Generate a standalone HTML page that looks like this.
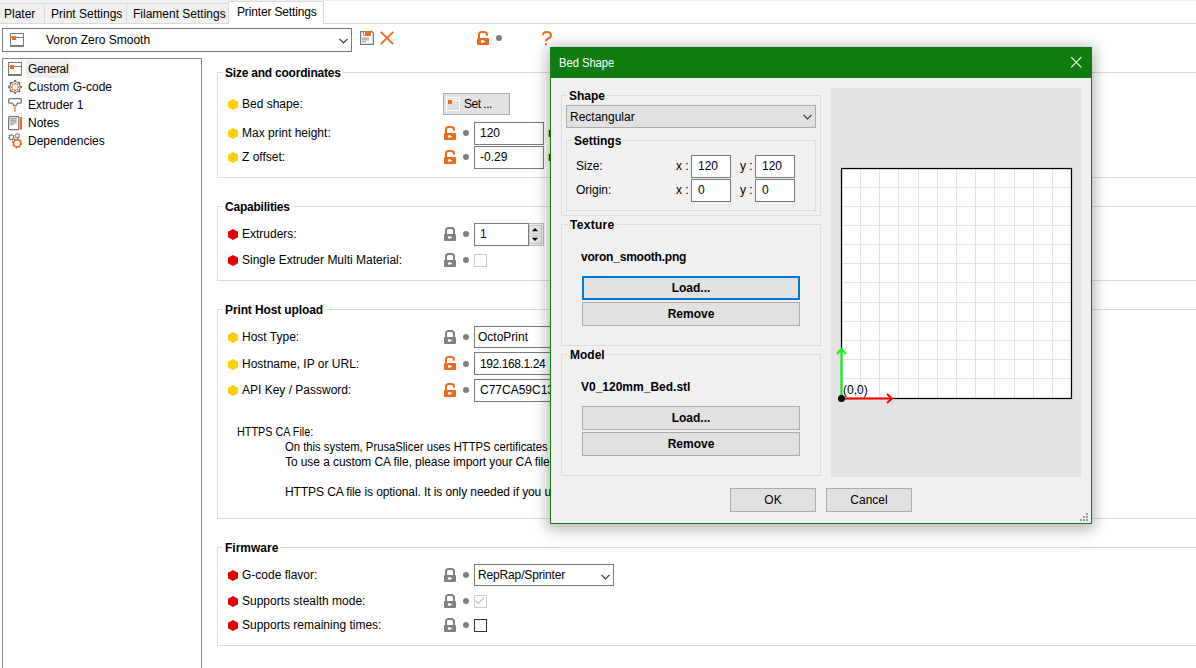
<!DOCTYPE html>
<html><head><meta charset="utf-8">
<style>
*{margin:0;padding:0;box-sizing:border-box}
html,body{width:1196px;height:668px;overflow:hidden;background:#fff;font-family:"Liberation Sans",sans-serif;font-size:12px;color:#000}
.a{position:absolute}
.t{position:absolute;white-space:nowrap;line-height:14px;height:14px}
.b{font-weight:bold}
.gb{position:absolute;border:1px solid #dcdcdc}
.gt{position:absolute;white-space:nowrap;font-weight:bold;line-height:14px;padding:0 2px}
.inp{position:absolute;background:#fff;border:1px solid #7a7a7a}
.btn{position:absolute;background:#e1e1e1;border:1px solid #adadad;text-align:center}
.hexy{position:absolute;width:10px;height:11px;background:#ffd000;clip-path:polygon(50% 0,100% 25%,100% 75%,50% 100%,0 75%,0 25%)}
.hexr{position:absolute;width:10px;height:11px;background:#e20000;clip-path:polygon(50% 0,100% 25%,100% 75%,50% 100%,0 75%,0 25%)}
.dot{position:absolute;width:6px;height:6px;border-radius:3px;background:#808080}
</style></head><body>

<!-- tab header -->
<div class="a" style="left:0;top:0;width:1196px;height:1px;background:#f0f0f0"></div>
<div class="a" style="left:0;top:1px;width:228px;height:3px;background:#f0f0f0"></div>
<div class="a" style="left:0;top:3px;width:228px;height:21px;background:#f0f0f0;border-top:1px solid #dadada;border-bottom:1px solid #dadada"></div>
<div class="a" style="left:44px;top:3px;width:1px;height:21px;background:#dadada"></div>
<div class="a" style="left:126px;top:3px;width:1px;height:21px;background:#dadada"></div>
<div class="a" style="left:323px;top:23px;width:873px;height:1px;background:#dadada"></div>
<div class="a" style="left:228px;top:1px;width:96px;height:23px;background:#fff;border:1px solid #dadada;border-bottom:none"></div>
<div class="t" style="left:4px;top:7px">Plater</div>
<div class="t" style="left:51px;top:7px">Print Settings</div>
<div class="t" style="left:133px;top:7px">Filament Settings</div>
<div class="t" style="left:237px;top:5px;letter-spacing:-0.15px">Printer Settings</div>

<!-- preset combo -->
<div class="a" style="left:2px;top:28px;width:350px;height:24px;border:1px solid #7a7a7a;background:#fff"></div>
<svg class="a" style="left:10px;top:33px" width="14" height="14" viewBox="0 0 14 14"><rect x="0.5" y="0.5" width="13" height="12" fill="#fff" stroke="#7a7a7a"/><rect x="0" y="12" width="14" height="2" fill="#7a7a7a"/><line x1="0" y1="4.5" x2="14" y2="4.5" stroke="#7a7a7a"/><rect x="2" y="3" width="4" height="4" fill="#ed6b21"/></svg>
<div class="t" style="left:46px;top:33px">Voron Zero Smooth</div>
<svg class="a" style="left:339px;top:38px" width="9" height="6" viewBox="0 0 9 6"><polyline points="0.5,0.8 4.5,4.8 8.5,0.8" fill="none" stroke="#333" stroke-width="1.2"/></svg>
<!-- save icon -->
<svg class="a" style="left:360px;top:31px" width="14" height="14" viewBox="0 0 14 14"><path d="M0.6 0.6 H12 L13.4 2 V13.4 H0.6 Z" fill="#fff" stroke="#777" stroke-width="1.2"/><rect x="3" y="0" width="8" height="5" rx="1" fill="#ed6b21"/><rect x="4" y="1" width="1" height="3" fill="#fff"/><rect x="2" y="6.5" width="7" height="1.3" fill="#aaa"/><rect x="2" y="8.2" width="7" height="1.3" fill="#aaa"/><rect x="2" y="10" width="4" height="1.3" fill="#aaa"/></svg>
<svg class="a" style="left:380px;top:31px" width="14" height="14" viewBox="0 0 14 14"><path d="M0.8 0.8 L13.2 13.2 M13.2 0.8 L0.8 13.2" stroke="#ed6b21" stroke-width="1.9"/></svg>
<!-- top lock and ? -->
<svg class="a" style="left:477px;top:31px" width="13" height="14"><use href="#locko"/></svg>
<div class="dot" style="left:496px;top:35px"></div>
<svg class="a" style="left:542px;top:31px" width="11" height="15" viewBox="0 0 11 15"><path d="M1 4.3 Q1 1 5 1 Q9 1 9 4.3 Q9 6.6 6.2 7.5 Q4 8.3 4 10.6" fill="none" stroke="#ed6b21" stroke-width="1.9"/><rect x="3" y="12.3" width="2" height="1.8" fill="#ed6b21"/></svg>

<!-- tree -->
<div class="a" style="left:2px;top:58px;width:200px;height:620px;border:1px solid #828790;background:#fff"></div>
<div class="a" style="left:26px;top:60px;width:44px;height:18px;background:#efefef"></div>
<svg class="a" style="left:8px;top:62px" width="14" height="14" viewBox="0 0 14 14"><rect x="0.5" y="0.5" width="13" height="12" fill="#fff" stroke="#7a7a7a"/><rect x="0" y="12" width="14" height="2" fill="#7a7a7a"/><line x1="0" y1="4.5" x2="14" y2="4.5" stroke="#7a7a7a"/><rect x="2" y="3" width="4" height="4" fill="#ed6b21"/></svg>
<svg class="a" style="left:8px;top:80px" width="14" height="14" viewBox="0 0 14 14"><path d="M5.61 1.58 L6.12 0.06 L7.88 0.06 L8.39 1.58 L9.85 2.18 L11.29 1.47 L12.53 2.71 L11.82 4.15 L12.42 5.61 L13.94 6.12 L13.94 7.88 L12.42 8.39 L11.82 9.85 L12.53 11.29 L11.29 12.53 L9.85 11.82 L8.39 12.42 L7.88 13.94 L6.12 13.94 L5.61 12.42 L4.15 11.82 L2.71 12.53 L1.47 11.29 L2.18 9.85 L1.58 8.39 L0.06 7.88 L0.06 6.12 L1.58 5.61 L2.18 4.15 L1.47 2.71 L2.71 1.47 L4.15 2.18 Z M2.30 7.00 a4.70 4.70 0 1 0 9.40 0 a4.70 4.70 0 1 0 -9.40 0 Z" fill="#787878" fill-rule="evenodd"/><rect x="6.15" y="3" width="1.7" height="1.5" fill="#ed6b21" transform="rotate(0 7 7)"/><rect x="6.15" y="3" width="1.7" height="1.5" fill="#ed6b21" transform="rotate(45 7 7)"/><rect x="6.15" y="3" width="1.7" height="1.5" fill="#ed6b21" transform="rotate(90 7 7)"/><rect x="6.15" y="3" width="1.7" height="1.5" fill="#ed6b21" transform="rotate(135 7 7)"/><rect x="6.15" y="3" width="1.7" height="1.5" fill="#ed6b21" transform="rotate(180 7 7)"/><rect x="6.15" y="3" width="1.7" height="1.5" fill="#ed6b21" transform="rotate(225 7 7)"/><rect x="6.15" y="3" width="1.7" height="1.5" fill="#ed6b21" transform="rotate(270 7 7)"/><rect x="6.15" y="3" width="1.7" height="1.5" fill="#ed6b21" transform="rotate(315 7 7)"/></svg>
<svg class="a" style="left:8px;top:98px" width="15" height="15" viewBox="0 0 15 15"><path d="M1.6 0.7 H12.4 Q13.3 0.7 13.3 1.6 V4.3 Q13.3 5.2 12.4 5.2 H10 Q9.4 5.2 9 6 Q8.3 7.8 7 7.8 Q5.7 7.8 5 6 Q4.6 5.2 4 5.2 H1.6 Q0.7 5.2 0.7 4.3 V1.6 Q0.7 0.7 1.6 0.7 Z" fill="#fff" stroke="#777" stroke-width="1.3"/><rect x="6" y="8.4" width="2" height="5.4" fill="#f4a271"/></svg>
<svg class="a" style="left:8px;top:116px" width="15" height="15" viewBox="0 0 15 15"><rect x="0.65" y="0.65" width="10.2" height="13" rx="0.8" fill="#fff" stroke="#777" stroke-width="1.3"/><rect x="2.2" y="2" width="6.5" height="6.2" fill="#d4d4d4"/><rect x="2.2" y="2" width="6.5" height="1.1" fill="#a6a6a6"/><rect x="2.2" y="3.8" width="6.5" height="1.1" fill="#a6a6a6"/><rect x="2.2" y="5.6" width="6.5" height="1.1" fill="#a6a6a6"/><rect x="2.2" y="7.4" width="3.8" height="1.8" fill="#b0b0b0"/><rect x="12" y="1" width="2" height="12.7" fill="#ed6b21"/></svg>
<svg class="a" style="left:5px;top:130px" width="20" height="20" viewBox="0 0 20 20"><path d="M5.64 4.92 L5.72 3.97 L7.08 3.97 L7.16 4.92 L7.79 5.22 L8.58 4.69 L9.43 5.76 L8.74 6.41 L8.89 7.09 L9.80 7.38 L9.50 8.71 L8.55 8.57 L8.12 9.11 L8.46 10.01 L7.23 10.60 L6.75 9.78 L6.05 9.78 L5.57 10.60 L4.34 10.01 L4.68 9.11 L4.25 8.57 L3.30 8.71 L3.00 7.38 L3.91 7.09 L4.06 6.41 L3.37 5.76 L4.22 4.69 L5.01 5.22 Z M4.70 7.30 a1.70 1.70 0 1 0 3.40 0 a1.70 1.70 0 1 0 -3.40 0 Z" fill="#727272" fill-rule="evenodd"/><path d="M11.66 3.84 L11.75 3.08 L13.05 3.08 L13.14 3.84 L13.73 4.17 L14.43 3.87 L15.08 5.00 L14.47 5.46 L14.47 6.14 L15.08 6.60 L14.43 7.73 L13.73 7.43 L13.14 7.76 L13.05 8.52 L11.75 8.52 L11.66 7.76 L11.07 7.43 L10.37 7.73 L9.72 6.60 L10.33 6.14 L10.33 5.46 L9.72 5.00 L10.37 3.87 L11.07 4.17 Z M11.20 5.80 a1.20 1.20 0 1 0 2.40 0 a1.20 1.20 0 1 0 -2.40 0 Z" fill="#858585" fill-rule="evenodd"/><path d="M11.80 9.01 L12.22 8.00 L14.01 8.36 L14.01 9.46 L14.85 10.03 L15.86 9.61 L16.87 11.13 L16.09 11.90 L16.29 12.90 L17.30 13.32 L16.94 15.11 L15.84 15.11 L15.27 15.95 L15.69 16.96 L14.17 17.97 L13.40 17.19 L12.40 17.39 L11.98 18.40 L10.19 18.04 L10.19 16.94 L9.35 16.37 L8.34 16.79 L7.33 15.27 L8.11 14.50 L7.91 13.50 L6.90 13.08 L7.26 11.29 L8.36 11.29 L8.93 10.45 L8.51 9.44 L10.03 8.43 L10.80 9.21 Z M9.30 13.20 a2.80 2.80 0 1 0 5.60 0 a2.80 2.80 0 1 0 -5.60 0 Z" fill="#ed6b21" fill-rule="evenodd"/></svg>
<div class="t" style="left:28px;top:62px;letter-spacing:-0.35px">General</div>
<div class="t" style="left:28px;top:80px">Custom G-code</div>
<div class="t" style="left:28px;top:98px">Extruder 1</div>
<div class="t" style="left:28px;top:116px">Notes</div>
<div class="t" style="left:28px;top:134px">Dependencies</div>

<!-- group boxes main -->
<div class="gb" style="left:217px;top:72px;width:1000px;height:106px"></div>
<div class="gt" style="left:223px;top:66px;background:#fff;letter-spacing:-0.22px">Size and coordinates</div>
<div class="gb" style="left:217px;top:206px;width:1000px;height:75px"></div>
<div class="gt" style="left:223px;top:200px;background:#fff;letter-spacing:-0.22px">Capabilities</div>
<div class="gb" style="left:217px;top:309px;width:1000px;height:210px"></div>
<div class="gt" style="left:223px;top:303px;background:#fff;letter-spacing:-0.12px">Print Host upload</div>
<div class="gb" style="left:217px;top:547px;width:1000px;height:99px"></div>
<div class="gt" style="left:223px;top:541px;background:#fff">Firmware</div>

<!-- rows -->
<div class="hexy" style="left:228px;top:99px"></div><div class="t" style="left:242px;top:97px">Bed shape:</div>
<div class="hexy" style="left:228px;top:128px"></div><div class="t" style="left:242px;top:126px">Max print height:</div>
<div class="hexy" style="left:228px;top:152px"></div><div class="t" style="left:242px;top:150px">Z offset:</div>
<div class="hexr" style="left:228px;top:229px"></div><div class="t" style="left:242px;top:227px">Extruders:</div>
<div class="hexr" style="left:228px;top:255px"></div><div class="t" style="left:242px;top:253px">Single Extruder Multi Material:</div>
<div class="hexy" style="left:228px;top:332px"></div><div class="t" style="left:242px;top:330px">Host Type:</div>
<div class="hexy" style="left:228px;top:359px"></div><div class="t" style="left:242px;top:357px">Hostname, IP or URL:</div>
<div class="hexy" style="left:228px;top:385px"></div><div class="t" style="left:242px;top:383px">API Key / Password:</div>
<div class="hexr" style="left:228px;top:570px"></div><div class="t" style="left:242px;top:568px">G-code flavor:</div>
<div class="hexr" style="left:228px;top:596px"></div><div class="t" style="left:242px;top:594px">Supports stealth mode:</div>
<div class="hexr" style="left:228px;top:620px"></div><div class="t" style="left:242px;top:618px">Supports remaining times:</div>

<!-- set button -->
<div class="btn" style="left:443px;top:93px;width:67px;height:22px"></div>
<svg class="a" style="left:446px;top:97px" width="14" height="14" viewBox="0 0 14 14"><rect x="0.5" y="0.5" width="13" height="13" fill="#dedede" stroke="#fff"/><rect x="1" y="2.6" width="12" height="1.1" fill="#fbfbfb"/><rect x="2" y="3" width="4" height="4" fill="#ed6b21"/></svg>
<div class="t" style="left:464px;top:97px;letter-spacing:-0.5px">Set ...</div>

<svg width="0" height="0" style="position:absolute"><defs>
<symbol id="lockc" viewBox="0 0 13 14"><path d="M2 8 V3.6 Q2 1 4.6 1 H7.4 Q10 1 10 3.6 V8" fill="none" stroke="#808080" stroke-width="2"/><rect x="0" y="7" width="12" height="7" rx="1" fill="#808080"/><circle cx="5.3" cy="10.5" r="1.4" fill="#fff"/><rect x="5.3" y="9.9" width="2.7" height="1.2" fill="#fff"/></symbol>
<symbol id="locko" viewBox="0 0 13 14"><path d="M2 8 V3.6 Q2 1 4.6 1 H7.4 Q10 1 10 3.6 V4.8" fill="none" stroke="#ed6b21" stroke-width="2"/><rect x="0" y="7" width="12" height="7" rx="1" fill="#ed6b21"/><circle cx="5.3" cy="10.5" r="1.4" fill="#fff"/><rect x="5.3" y="9.9" width="2.7" height="1.2" fill="#fff"/></symbol>
</defs></svg>

<svg class="a" style="left:444px;top:126px" width="13" height="14"><use href="#locko"/></svg><div class="dot" style="left:463px;top:130px"></div>
<div class="inp" style="left:474px;top:122px;width:70px;height:23px"></div><div class="t" style="left:480px;top:126px">120</div>
<div class="t" style="left:548px;top:126px">mm</div>
<svg class="a" style="left:444px;top:150px" width="13" height="14"><use href="#locko"/></svg><div class="dot" style="left:463px;top:154px"></div>
<div class="inp" style="left:474px;top:146px;width:70px;height:23px"></div><div class="t" style="left:480px;top:150px">-0.29</div>
<div class="t" style="left:548px;top:150px">mm</div>

<svg class="a" style="left:444px;top:227px" width="13" height="14"><use href="#lockc"/></svg><div class="dot" style="left:463px;top:231px"></div>
<div class="inp" style="left:474px;top:223px;width:55px;height:23px"></div><div class="t" style="left:480px;top:227px">1</div>
<div class="a" style="left:529px;top:223px;width:15px;height:23px;border:1px solid #bcbcbc;border-left:none;background:#ececec"></div>
<div class="a" style="left:529px;top:225px;width:13px;height:9px;background:#e6e6e6;border:1px solid #c9c9c9"></div>
<div class="a" style="left:529px;top:235px;width:13px;height:9px;background:#e6e6e6;border:1px solid #c9c9c9"></div>
<svg class="a" style="left:531px;top:227px" width="8" height="16"><path d="M0.8 4.3 L4 1 L7.2 4.3 Z" fill="#000"/><path d="M0.8 10.7 L4 14 L7.2 10.7 Z" fill="#000"/></svg>
<svg class="a" style="left:444px;top:253px" width="13" height="14"><use href="#lockc"/></svg><div class="dot" style="left:463px;top:257px"></div>
<div class="a" style="left:474px;top:254px;width:13px;height:13px;border:1px solid #cccccc;background:#fff"></div>

<svg class="a" style="left:444px;top:330px" width="13" height="14"><use href="#lockc"/></svg><div class="dot" style="left:463px;top:334px"></div>
<div class="inp" style="left:474px;top:326px;width:200px;height:22px"></div><div class="t" style="left:478px;top:330px">OctoPrint</div>
<svg class="a" style="left:444px;top:356px" width="13" height="14"><use href="#locko"/></svg><div class="dot" style="left:463px;top:361px"></div>
<div class="inp" style="left:474px;top:352px;width:200px;height:23px"></div><div class="t" style="left:480px;top:357px;letter-spacing:-0.4px">192.168.1.24</div>
<svg class="a" style="left:444px;top:383px" width="13" height="14"><use href="#locko"/></svg><div class="dot" style="left:463px;top:387px"></div>
<div class="inp" style="left:474px;top:379px;width:200px;height:23px"></div><div class="t" style="left:480px;top:383px">C77CA59C132</div>

<div class="t" style="left:237px;top:425px;transform:scaleX(0.9);transform-origin:0 0">HTTPS CA File:</div>
<div class="t" style="left:285px;top:440px;transform:scaleX(0.94);transform-origin:0 0">On this system, PrusaSlicer uses HTTPS certificates from the system Certificate Store or Keychain.</div>
<div class="t" style="left:285px;top:455px;letter-spacing:-0.08px">To use a custom CA file, please import your CA file into Certificate Store / Keychain.</div>
<div class="t" style="left:285px;top:485px;letter-spacing:-0.09px">HTTPS CA file is optional. It is only needed if you use HTTPS with a self-signed certificate.</div>

<svg class="a" style="left:444px;top:568px" width="13" height="14"><use href="#lockc"/></svg><div class="dot" style="left:463px;top:572px"></div>
<div class="inp" style="left:474px;top:564px;width:140px;height:22px"></div><div class="t" style="left:478px;top:568px;letter-spacing:-0.15px">RepRap/Sprinter</div>
<svg class="a" style="left:601px;top:574px" width="9" height="6" viewBox="0 0 9 6"><polyline points="0.5,0.8 4.5,4.8 8.5,0.8" fill="none" stroke="#333" stroke-width="1.2"/></svg>
<svg class="a" style="left:444px;top:594px" width="13" height="14"><use href="#lockc"/></svg><div class="dot" style="left:463px;top:598px"></div>
<div class="a" style="left:474px;top:595px;width:13px;height:13px;border:1px solid #cccccc;background:#fff"></div>
<svg class="a" style="left:474px;top:595px" width="13" height="13"><polyline points="1.6,5.6 4.3,8.3 10.3,2.4" fill="none" stroke="#c4c4c4" stroke-width="1.2"/></svg>
<svg class="a" style="left:444px;top:618px" width="13" height="14"><use href="#lockc"/></svg><div class="dot" style="left:463px;top:622px"></div>
<div class="a" style="left:474px;top:619px;width:13px;height:13px;border:1px solid #333;background:#fff"></div>

<!-- dialog shadow -->
<div class="a" style="left:550px;top:47px;width:542px;height:477px;box-shadow:0 0 12px 2px rgba(0,0,0,0.17), 0 6px 16px 2px rgba(0,0,0,0.17)"></div>
<!-- dialog -->
<div class="a" style="left:550px;top:47px;width:542px;height:477px;background:#f0f0f0;border:1px solid #107c10"></div>
<div class="a" style="left:550px;top:47px;width:542px;height:31px;background:#107c10"></div>
<div class="t" style="left:559px;top:56px;color:#fff;transform:scaleX(0.93);transform-origin:0 0">Bed Shape</div>
<svg class="a" style="left:1070px;top:56px" width="13" height="13"><path d="M1.2 1.2 L11.3 11.3 M11.3 1.2 L1.2 11.3" stroke="#fff" stroke-width="1.1"/></svg>

<!-- shape group -->
<div class="gb" style="left:561px;top:95px;width:260px;height:121px"></div>
<div class="gt" style="left:567px;top:89px;background:#f0f0f0">Shape</div>
<div class="btn" style="left:566px;top:105px;width:250px;height:23px;text-align:left"></div>
<div class="t" style="left:570px;top:110px">Rectangular</div>
<svg class="a" style="left:803px;top:114px" width="9" height="6" viewBox="0 0 9 6"><polyline points="0.5,0.8 4.5,4.8 8.5,0.8" fill="none" stroke="#333" stroke-width="1.2"/></svg>
<div class="gb" style="left:566px;top:140px;width:250px;height:71px"></div>
<div class="gt" style="left:572px;top:134px;background:#f0f0f0">Settings</div>
<div class="t" style="left:576px;top:159px">Size:</div>
<div class="t" style="left:576px;top:183px">Origin:</div>
<div class="t" style="left:676px;top:159px">x :</div>
<div class="t" style="left:676px;top:183px">x :</div>
<div class="t" style="left:740px;top:159px">y :</div>
<div class="t" style="left:740px;top:183px">y :</div>
<div class="inp" style="left:691px;top:155px;width:40px;height:23px"></div><div class="t" style="left:698px;top:159px">120</div>
<div class="inp" style="left:755px;top:155px;width:40px;height:23px"></div><div class="t" style="left:762px;top:159px">120</div>
<div class="inp" style="left:691px;top:179px;width:40px;height:23px"></div><div class="t" style="left:698px;top:183px">0</div>
<div class="inp" style="left:755px;top:179px;width:40px;height:23px"></div><div class="t" style="left:762px;top:183px">0</div>

<!-- texture group -->
<div class="gb" style="left:561px;top:224px;width:260px;height:122px"></div>
<div class="gt" style="left:568px;top:218px;background:#f0f0f0;letter-spacing:0.3px">Texture</div>
<div class="t b" style="left:581px;top:250px;letter-spacing:-0.22px">voron_smooth.png</div>
<div class="btn" style="left:582px;top:276px;width:218px;height:24px;border:2px solid #0078d7"></div>
<div class="t b" style="left:582px;top:281px;width:218px;text-align:center">Load...</div>
<div class="btn" style="left:582px;top:302px;width:218px;height:24px"></div>
<div class="t b" style="left:582px;top:307px;width:218px;text-align:center">Remove</div>

<!-- model group -->
<div class="gb" style="left:561px;top:354px;width:260px;height:122px"></div>
<div class="gt" style="left:568px;top:348px;background:#f0f0f0">Model</div>
<div class="t b" style="left:581px;top:380px">V0_120mm_Bed.stl</div>
<div class="btn" style="left:582px;top:406px;width:218px;height:24px"></div>
<div class="t b" style="left:582px;top:411px;width:218px;text-align:center">Load...</div>
<div class="btn" style="left:582px;top:432px;width:218px;height:24px"></div>
<div class="t b" style="left:582px;top:437px;width:218px;text-align:center">Remove</div>

<!-- preview -->
<div class="a" style="left:831px;top:88px;width:250px;height:389px;background:#e3e3e3"></div>
<svg class="a" style="left:831px;top:88px" width="250" height="389" viewBox="0 0 250 389">
<rect x="9.5" y="79.5" width="232" height="232" fill="#fafafa"/><rect x="10" y="80" width="231" height="231" fill="#fff"/>
<g stroke="#e3e3e3" stroke-width="1">
<path d="M29.5 81 V310 M48.5 81 V310 M67.5 81 V310 M87.5 81 V310 M106.5 81 V310 M125.5 81 V310 M144.5 81 V310 M163.5 81 V310 M183.5 81 V310 M202.5 81 V310 M221.5 81 V310"/>
<path d="M11 290.5 H240 M11 271.5 H240 M11 252.5 H240 M11 233.5 H240 M11 214.5 H240 M11 194.5 H240 M11 175.5 H240 M11 156.5 H240 M11 137.5 H240 M11 118.5 H240 M11 99.5 H240"/>
</g>
<rect x="10.5" y="80.5" width="230" height="230" fill="none" stroke="#000" stroke-width="1.3"/>
<path d="M10.5 310.5 V261" stroke="#00ff00" stroke-width="2" fill="none"/>
<path d="M6 266 L10.5 261 L15 266" stroke="#00ff00" stroke-width="2" fill="none"/>
<path d="M10 310.5 H60" stroke="#ff0000" stroke-width="2" fill="none"/>
<path d="M56 306 L61 310.5 L56 315" stroke="#ff0000" stroke-width="2" fill="none"/>
<circle cx="10.5" cy="310.5" r="3.5" fill="#000"/>
<text x="12" y="306" font-family="Liberation Sans" font-size="12" fill="#000">(0,0)</text>
</svg>

<div class="btn" style="left:730px;top:488px;width:86px;height:24px"></div>
<div class="t" style="left:730px;top:493px;width:86px;text-align:center">OK</div>
<div class="btn" style="left:826px;top:488px;width:86px;height:24px"></div>
<div class="t" style="left:826px;top:493px;width:86px;text-align:center">Cancel</div>
<svg class="a" style="left:1080px;top:513px" width="9" height="9"><g fill="#a0a0a0"><rect x="6" y="0" width="2" height="2"/><rect x="3" y="3" width="2" height="2"/><rect x="6" y="3" width="2" height="2"/><rect x="0" y="6" width="2" height="2"/><rect x="3" y="6" width="2" height="2"/><rect x="6" y="6" width="2" height="2"/></g></svg>

</body></html>
